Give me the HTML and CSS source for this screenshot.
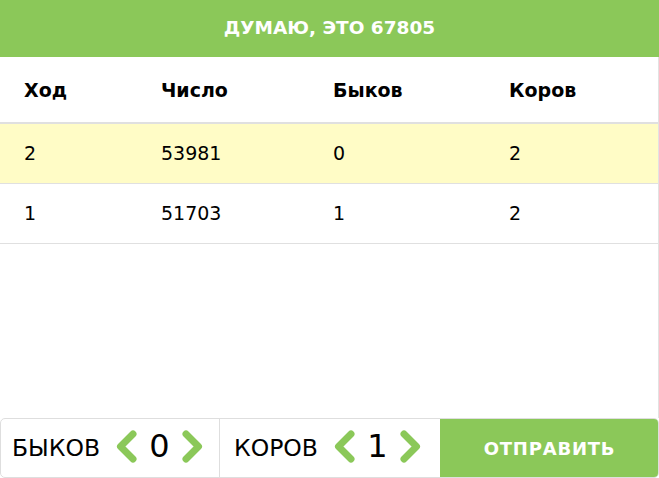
FILE: index.html
```html
<!DOCTYPE html>
<html lang="ru">
<head>
<meta charset="utf-8">
<title>Быки и коровы</title>
<link rel="stylesheet" href="styles.css">
</head>
<body>
<div class="app">
  <div class="title">ДУМАЮ, ЭТО 67805</div>
  <div class="board">
    <table class="moves">
      <colgroup>
        <col class="c1"><col class="c2"><col class="c3"><col class="c4">
      </colgroup>
      <thead>
        <tr><th>Ход</th><th>Число</th><th>Быков</th><th>Коров</th></tr>
      </thead>
      <tbody>
        <tr class="current"><td>2</td><td>53981</td><td>0</td><td>2</td></tr>
        <tr><td>1</td><td>51703</td><td>1</td><td>2</td></tr>
      </tbody>
    </table>
  </div>
  <div class="controls">
    <div class="counter">
      <span class="label">БЫКОВ</span>
      <button class="arrow" aria-label="меньше"><svg width="21" height="33" viewBox="0 0 21 33"><path d="M17 4 L4.5 16.5 L17 29" fill="none" stroke="#8bc859" stroke-width="7" stroke-linecap="round" stroke-linejoin="round"/></svg></button>
      <span class="value">0</span>
      <button class="arrow" aria-label="больше"><svg width="21" height="33" viewBox="0 0 21 33"><path d="M4 4 L16.5 16.5 L4 29" fill="none" stroke="#8bc859" stroke-width="7" stroke-linecap="round" stroke-linejoin="round"/></svg></button>
    </div>
    <div class="counter second">
      <span class="label">КОРОВ</span>
      <button class="arrow" aria-label="меньше"><svg width="21" height="33" viewBox="0 0 21 33"><path d="M17 4 L4.5 16.5 L17 29" fill="none" stroke="#8bc859" stroke-width="7" stroke-linecap="round" stroke-linejoin="round"/></svg></button>
      <span class="value">1</span>
      <button class="arrow" aria-label="больше"><svg width="21" height="33" viewBox="0 0 21 33"><path d="M4 4 L16.5 16.5 L4 29" fill="none" stroke="#8bc859" stroke-width="7" stroke-linecap="round" stroke-linejoin="round"/></svg></button>
    </div>
    <button class="send">ОТПРАВИТЬ</button>
  </div>
</div>
</body>
</html>
```
FILE: styles.css
```css
* { box-sizing: border-box; }
html, body { margin: 0; padding: 0; background: #fff; }
body { font-family: "DejaVu Sans", sans-serif; color: #000; }
.app {
  width: 659px;
  height: 478px;
  display: flex;
  flex-direction: column;
}
.title {
  height: 57px;
  background: #8bc859;
  color: #fff;
  font-weight: bold;
  font-size: 18.5px;
  display: flex;
  align-items: center;
  justify-content: center;
  padding-bottom: 2px;
}
.board {
  flex: 1;
  border-right: 1px solid #e2e2e2;
}
.moves {
  width: 100%;
  border-collapse: collapse;
  table-layout: fixed;
  font-size: 19px;
}
.c1 { width: 137px; }
.c2 { width: 172px; }
.c3 { width: 176px; }
.moves th {
  text-align: left;
  font-weight: bold;
  height: 66px;
  padding: 0 0 0 24px;
  border-bottom: 2px solid #e0e0e0;
}
.moves td {
  height: 60px;
  padding: 0 0 0 24px;
  border-bottom: 1px solid #e0e0e0;
}
.moves tr.current td { background: #fffcc6; }
.controls {
  height: 60px;
  display: flex;
  border: 1px solid #dedede;
  border-radius: 5px;
  overflow: hidden;
}
.counter {
  width: 219px;
  display: flex;
  align-items: center;
  padding-left: 11px;
  border-right: 1px solid #dedede;
}
.counter.second { width: 220px; padding-left: 14px; border-right: none; }
.label {
  font-family: "DejaVu Sans", sans-serif;
  font-size: 23.5px;
  width: 104px;
}
.counter.second .label { width: 100px; }
.arrow {
  border: 0;
  background: none;
  padding: 0;
  display: flex;
  cursor: pointer;
  margin-top: -3px;
}
.value {
  font-family: "DejaVu Sans", sans-serif;
  font-size: 32px;
  width: 45px;
  text-align: center;
  margin-top: -4px;
}
.send {
  flex: 1;
  border: 0;
  margin: -1px -1px -1px 0;
  background: #8bc859;
  color: #fff;
  font-family: "DejaVu Sans", sans-serif;
  font-weight: bold;
  font-size: 18px;
  letter-spacing: 0.8px;
  cursor: pointer;
}
```
